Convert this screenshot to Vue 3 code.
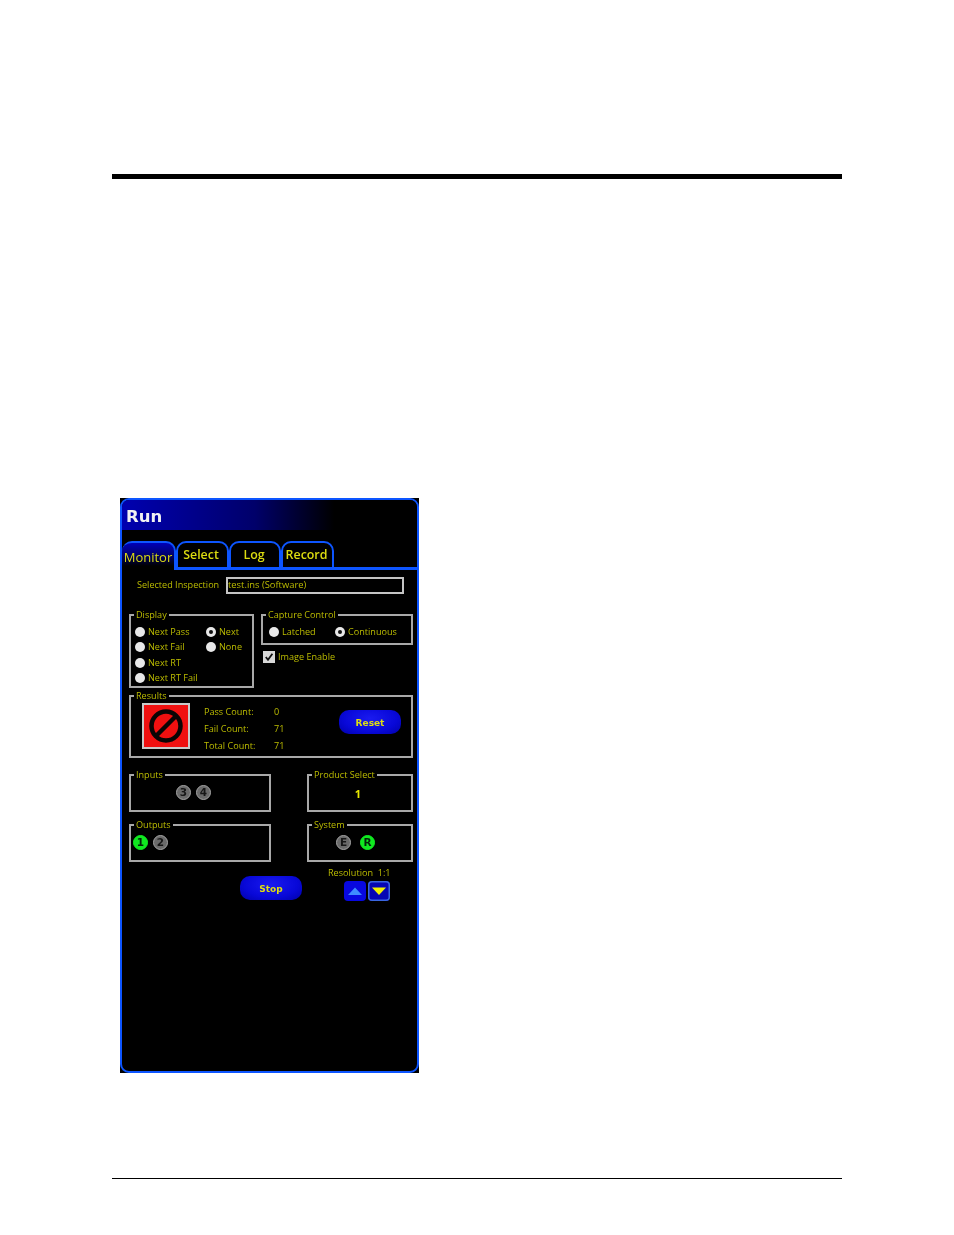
<script setup>
const displayLeft = [
  { label: 'Next Pass' },
  { label: 'Next Fail' },
  { label: 'Next RT' },
  { label: 'Next RT Fail' }
]
const displayRight = [
  { label: 'Next', on: true },
  { label: 'None' }
]
const counts = [
  { label: 'Pass Count:', value: '0' },
  { label: 'Fail Count:', value: '71' },
  { label: 'Total Count:', value: '71' }
]
</script>

<template>
  <div class="page">
    <div class="top-rule"></div>
    <div class="panel-frame">
    <section class="panel">
      <h1 class="title">Run</h1>
      <nav class="tabs">
        <div class="tab active">Monitor</div>
        <div class="tab select">Select</div>
        <div class="tab log">Log</div>
        <div class="tab record">Record</div>
        <div class="tab-fill"></div>
      </nav>
      <div class="body">
        <div class="inspection">
          <span class="inspection-label">Selected Inspection</span>
          <div class="inspection-field">test.ins (Software)</div>
        </div>

        <div class="row-display">
          <div class="group display">
            <span class="legend">Display</span>
            <div class="radio-col left">
              <label v-for="r in displayLeft" :key="r.label" class="radio">
                <i class="dot"></i>{{ r.label }}
              </label>
            </div>
            <div class="radio-col">
              <label v-for="r in displayRight" :key="r.label" class="radio">
                <i class="dot" :class="{ on: r.on }"></i>{{ r.label }}
              </label>
            </div>
          </div>
          <div class="capture-col">
            <div class="group capture">
              <span class="legend">Capture Control</span>
              <label class="radio latched"><i class="dot"></i>Latched</label>
              <label class="radio"><i class="dot on"></i>Continuous</label>
            </div>
            <label class="image-enable">
              <svg class="check" viewBox="0 0 12 12" width="12" height="12">
                <rect x="0" y="0" width="12" height="12" fill="#d8d8d8" />
                <path d="M2.8 6 L5 8.8 L9.4 2.8" fill="none" stroke="#111" stroke-width="1.8" />
              </svg>
              Image Enable
            </label>
          </div>
        </div>

        <div class="group results">
          <span class="legend">Results</span>
          <div class="stop-sign">
            <svg viewBox="0 0 44 42" width="44" height="42">
              <rect width="44" height="42" fill="#f01010" />
              <circle cx="22" cy="21" r="14.5" fill="none" stroke="#0a0505" stroke-width="4.5" />
              <path d="M12 31 L32 11" stroke="#0a0505" stroke-width="4.5" />
            </svg>
          </div>
          <div class="counts">
            <div v-for="c in counts" :key="c.label" class="count">
              <span class="count-label">{{ c.label }}</span><span>{{ c.value }}</span>
            </div>
          </div>
          <button class="pill reset">Reset</button>
        </div>

        <div class="row-io first">
          <div class="group io-left inputs">
            <span class="legend">Inputs</span>
            <span class="badge">3</span><span class="badge">4</span>
          </div>
          <div class="group io-right product">
            <span class="legend">Product Select</span>
            <span class="product-value">1</span>
          </div>
        </div>
        <div class="row-io second">
          <div class="group io-left outputs">
            <span class="legend">Outputs</span>
            <span class="badge green">1</span><span class="badge">2</span>
          </div>
          <div class="group io-right system">
            <span class="legend">System</span>
            <span class="badge">E</span><span class="badge green">R</span>
          </div>
        </div>

        <div class="controls">
          <button class="pill stop">Stop</button>
          <div class="resolution">
            <span class="resolution-label">Resolution&nbsp;&nbsp;1:1</span>
            <div class="arrows">
              <div class="arrow">
                <svg viewBox="0 0 22 20" width="22" height="20"><path d="M4 14 L11 6.5 L18 14 Z" fill="#3f8cff" /></svg>
              </div>
              <div class="arrow down">
                <svg viewBox="0 0 22 20" width="22" height="20"><path d="M4 6.5 L18 6.5 L11 14 Z" fill="#f2f000" /></svg>
              </div>
            </div>
          </div>
        </div>
      </div>
    </section>
    </div>
    <div class="bottom-rule"></div>
  </div>
</template>

<style>
html, body { margin: 0; background: #fff; }
</style>

<style scoped>
.page {
  width: 954px;
  height: 1235px;
  padding: 174px 112px 0;
  box-sizing: border-box;
  background: #fff;
  overflow: hidden;
}
.top-rule { height: 5px; background: #000; }
.bottom-rule { height: 1px; background: #000; margin-top: 105px; }

.panel-frame {
  margin: 319px 0 0 8px;
  width: 299px;
  height: 575px;
  background: #000;
}
.panel {
  width: 299px;
  height: 575px;
  box-sizing: border-box;
  background: #000;
  border: 2px solid #0d55ff;
  border-radius: 9px;
  overflow: hidden;
  filter: blur(0.35px);
  font: 9.1px/12px "Open Sans", "Noto Sans", sans-serif;
  color: #bcbc00;
}
.title {
  margin: 0;
  height: 30px;
  padding-left: 4px;
  background: linear-gradient(90deg, #0000b0 0%, #00006a 45%, #000 72%);
  color: #f2f2f2;
  font: bold 16.5px/34px "DejaVu Sans", sans-serif;
}
.tabs {
  display: flex;
  height: 29px;
  margin-top: 11px;
}
.tab {
  box-sizing: border-box;
  height: 29px;
  border: 2px solid #0d55ff;
  border-bottom: 3px solid #0d55ff;
  border-radius: 10px 10px 0 0;
  color: #dcdc10;
  font: 600 12.4px/23px "Open Sans", sans-serif;
  text-align: center;
}
.tab.active {
  width: 54px;
  border-bottom: 0;
  border-left: 0;
  font: 13px/29px "Open Sans", sans-serif;
  background: linear-gradient(180deg, #0000b8 0%, #00006a 45%, #000 85%);
  white-space: nowrap;
}
.select { width: 53px; padding-right: 3px; }
.log { width: 52px; padding-right: 2px; }
.record { width: 53px; padding-right: 2px; }
.tab-fill { flex: 1; border-bottom: 3px solid #0d55ff; }

.body { padding: 7px 4px 0 7px; }
.inspection { display: flex; height: 17px; align-items: center; }
.inspection-label { width: 89px; margin-left: 8px; flex: none; line-height: 15px; padding-bottom: 2px; }
.inspection-field {
  box-sizing: border-box;
  width: 178px;
  height: 17px;
  border: 2px solid #c4c4c4;
  font-size: 9.4px;
  line-height: 12px;
  white-space: nowrap;
}

.group {
  position: relative;
  box-sizing: border-box;
  border: 2px solid #a8a8a8;
}
.legend {
  position: absolute;
  top: -7px;
  left: 3px;
  padding: 0 2px;
  background: #000;
  white-space: nowrap;
}

.row-display { display: flex; gap: 7px; margin-top: 20px; }
.display {
  display: flex;
  width: 125px;
  height: 74px;
  padding: 10px 0 0 4px;
}
.radio-col { display: flex; flex: none; flex-direction: column; gap: 3.4px; width: 45px; }
.radio-col.left { width: 71px; }
.radio { display: flex; align-items: center; gap: 3px; height: 12px; white-space: nowrap; }
.dot {
  flex: none;
  position: relative;
  width: 10px;
  height: 10px;
  border-radius: 50%;
  background: #e8e8e8;
}
.dot.on::after {
  content: '';
  position: absolute;
  inset: 3px;
  border-radius: 50%;
  background: #111;
}
.capture-col { width: 152px; }
.capture {
  display: flex;
  align-items: center;
  width: 152px;
  height: 31px;
  padding: 4px 0 0 6px;
}
.latched { width: 66px; }
.image-enable {
  display: flex;
  align-items: center;
  gap: 3px;
  height: 12px;
  margin: 6px 0 0 2px;
}
.check { flex: none; }

.results {
  display: flex;
  width: 284px;
  height: 63px;
  margin-top: 7px;
}
.stop-sign {
  flex: none;
  height: 42px;
  margin: 6px 0 0 11px;
  border: 2px solid #c8c8c8;
  line-height: 0;
}
.counts { margin: 8px 0 0 14px; width: 135px; }
.count { display: flex; height: 17px; line-height: 14px; }
.count-label { width: 70px; }
.pill {
  box-sizing: border-box;
  display: block;
  width: 62px;
  height: 24px;
  padding: 0;
  border: 0;
  border-radius: 10px;
  background: radial-gradient(ellipse at 50% 35%, #1a1af0 0%, #0808d8 60%, #0000a8 100%);
  color: #dede10;
  font: bold 9px/26px "DejaVu Sans", sans-serif;
}
.reset { margin-top: 13px; }

.row-io { display: flex; justify-content: space-between; width: 284px; }
.row-io.first { margin-top: 16px; }
.row-io.second { margin-top: 12px; }
.io-left { width: 142px; height: 38px; }
.io-right { width: 106px; height: 38px; }
.inputs, .outputs, .system { display: flex; align-items: center; padding-bottom: 2px; }
.product { display: flex; align-items: center; justify-content: center; padding-top: 2px; }
.inputs { padding-left: 45px; gap: 5px; }
.outputs { padding-left: 2px; gap: 5px; }
.system { padding-left: 27px; gap: 9px; }
.product-value { color: #e8e800; font: bold 11px/14px "Open Sans", sans-serif; margin-right: 4px; }
.badge {
  box-sizing: border-box;
  width: 15px;
  height: 15px;
  border-radius: 50%;
  background: #6a6a6a;
  border: 1.5px solid #a4a4a4;
  color: #161616;
  font: bold 10.5px/12px "DejaVu Sans", sans-serif;
  text-align: center;
}
.badge.green { background: #10e820; border-color: #10f020; color: #03240a; }

.controls { display: flex; align-items: flex-start; margin-top: 6px; }
.stop { margin: 8px 0 0 111px; }
.resolution { margin-left: 26px; width: 70px; }
.resolution-label { display: block; height: 13px; line-height: 10px; white-space: nowrap; }
.arrows { display: flex; gap: 2px; margin-left: 16px; }
.arrow {
  box-sizing: border-box;
  width: 22px;
  height: 20px;
  border-radius: 4px;
  background: #0808e0;
  line-height: 0;
}
.arrow.down { box-shadow: inset 0 0 0 1.5px #3a66e0; background: #0606b4; }
</style>
